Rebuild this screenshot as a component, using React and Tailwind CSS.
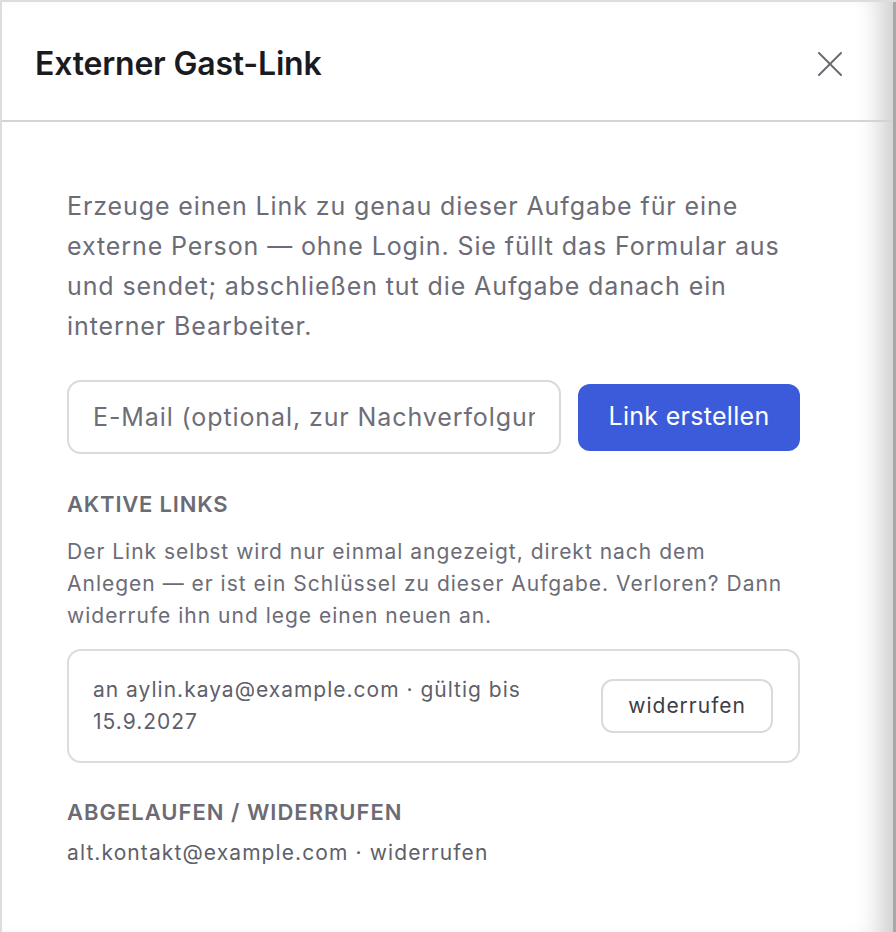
import { useState } from "react";

const links = [
  { id: 1, email: "aylin.kaya@example.com", until: "15.9.2027" },
];

const expired = [{ id: 2, email: "alt.kontakt@example.com", state: "widerrufen" }];

export default function App() {
  const [email, setEmail] = useState("");

  return (
    <div className="min-h-[932px] bg-[#dddddd] pt-[2px] pl-[2px] flex font-['Inter',sans-serif]">
      <div className="flex-1 h-[930px] bg-white shadow-[inset_-30px_0_26px_-18px_rgba(0,0,0,0.2)]">
        <div className="h-[120px] border-b-2 border-[#d4d4d4] flex items-center justify-between pl-[33px] pr-[51px]">
          <h2 className="text-[32px] font-semibold text-[#1b1b1f] tracking-[-0.2px] pt-[6px]">Externer Gast-Link</h2>
          <button className="text-[#6b6b74] pt-[5px]">
            <svg width="24" height="24" viewBox="0 0 24 24" fill="none" stroke="currentColor" strokeWidth="2" strokeLinecap="round">
              <path d="M1 1 23 23" />
              <path d="M23 1 1 23" />
            </svg>
          </button>
        </div>

        <div className="pl-[65px] pr-[93px] pt-[64px] text-[#6c6c77]">
          <p className="text-[25px] leading-[40px] tracking-[0.9px]">
            Erzeuge einen Link zu genau dieser Aufgabe für eine externe Person — ohne Login. Sie füllt das Formular aus und sendet; abschließen tut die Aufgabe danach ein interner Bearbeiter.
          </p>

          <div className="mt-[34px] flex items-center gap-[17px]">
            <input
              value={email}
              onChange={(e) => setEmail(e.target.value)}
              placeholder="E-Mail (optional, zur Nachverfolgung)"
              className="w-[494px] h-[74px] rounded-[14px] border-2 border-[#dadada] px-[24px] text-[25px] tracking-[0.9px] text-[#2b2b30] placeholder:text-[#6e6e78] outline-none"
            />
            <button className="flex-1 h-[67px] rounded-[12px] bg-[#3b5bdb] text-white text-[25px] tracking-[0.3px]">Link erstellen</button>
          </div>

          <h3 className="mt-[36px] text-[22px] leading-[28px] font-semibold uppercase tracking-[0.8px] text-[#6b6b75]">Aktive Links</h3>
          <p className="mt-[18px] text-[21px] leading-[32px] tracking-[1px]">
            Der Link selbst wird nur einmal angezeigt, direkt nach dem Anlegen — er ist ein Schlüssel zu dieser Aufgabe. Verloren? Dann widerrufe ihn und lege einen neuen an.
          </p>

          <div className="mt-[17px] flex flex-col gap-3">
            {links.map((l) => (
              <div key={l.id} className="h-[114px] rounded-[14px] border-2 border-[#dcdcdc] flex items-center justify-between pl-[24px] pr-[25px]">
                <p className="w-[460px] text-[21px] leading-[32px] tracking-[1px] text-[#5f5f6a]">
                  an {l.email} · gültig bis {l.until}
                </p>
                <button className="h-[54px] px-[25px] rounded-[12px] border-2 border-[#dadada] text-[21px] tracking-[1px] text-[#3d3d46]">widerrufen</button>
              </div>
            ))}
          </div>

          <h3 className="mt-[35px] text-[22px] leading-[28px] font-semibold uppercase tracking-[1px] text-[#6b6b75]">Abgelaufen / widerrufen</h3>
          {expired.map((l) => (
            <p key={l.id} className="mt-[11px] text-[21px] leading-[32px] tracking-[1.1px] text-[#5f5f6a]">
              {l.email} · {l.state}
            </p>
          ))}
        </div>
      </div>
      <div className="w-[3px] bg-[#a8a8a8]" />
    </div>
  );
}
